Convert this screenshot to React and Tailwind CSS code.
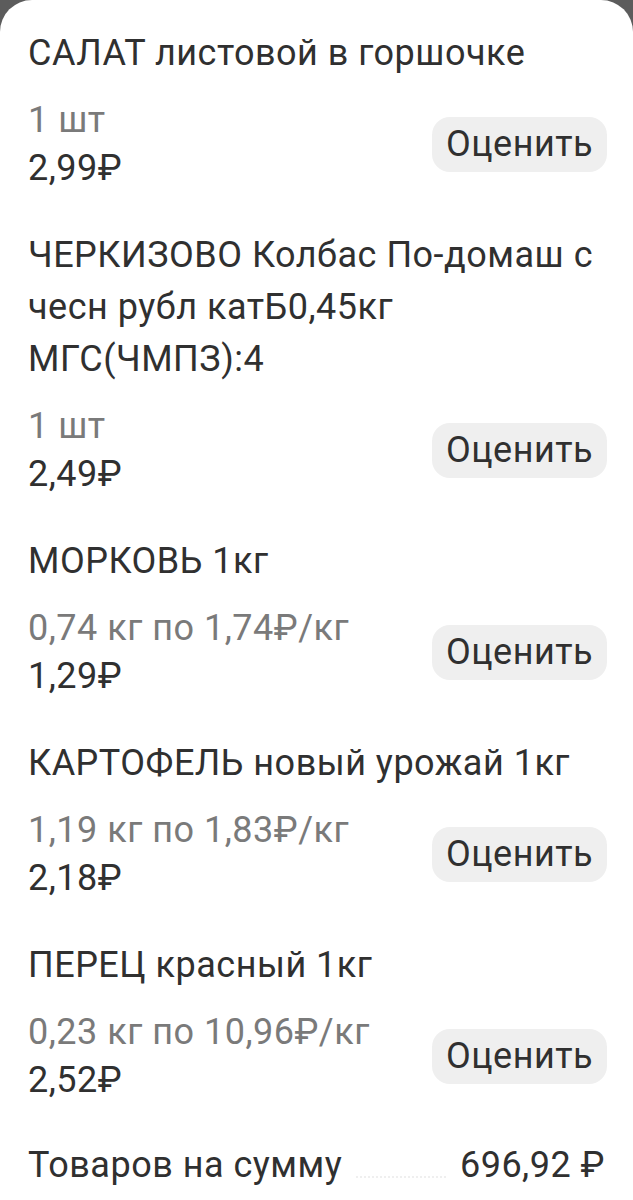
import React from 'react';

const items = [
  { title: ['САЛАТ листовой в горшочке'], qty: '1 шт', price: '2,99₽' },
  {
    title: ['ЧЕРКИЗОВО Колбас По-домаш с', 'чесн рубл катБ0,45кг', 'МГС(ЧМПЗ):4'],
    qty: '1 шт',
    price: '2,49₽',
  },
  { title: ['МОРКОВЬ 1кг'], qty: '0,74 кг по 1,74₽/кг', price: '1,29₽' },
  { title: ['КАРТОФЕЛЬ новый урожай 1кг'], qty: '1,19 кг по 1,83₽/кг', price: '2,18₽' },
  { title: ['ПЕРЕЦ красный 1кг'], qty: '0,23 кг по 10,96₽/кг', price: '2,52₽' },
];

const Item = ({ item }) => (
  <div className="flex flex-col">
    <div className="text-[36px] leading-[52px] tracking-[0.5px] text-[#303030]">
      {item.title.map((line) => (
        <div key={line} className="whitespace-nowrap">{line}</div>
      ))}
    </div>
    <div className="mt-[17px] flex items-center justify-between">
      <div className="flex flex-col text-[36px] leading-[48px] tracking-[0.5px]">
        <span className="text-[#7a7a7a]">{item.qty}</span>
        <span className="text-[#303030]">{item.price}</span>
      </div>
      <button className="w-[175px] h-[55px] rounded-[18px] bg-[#efefef] text-[36px] tracking-[0.5px] text-[#303030] flex items-center justify-center">
        Оценить
      </button>
    </div>
  </div>
);

export default function App() {
  return (
    <div
      className="h-[1200px] overflow-hidden bg-[#5c5c5c]"
      style={{ fontFamily: 'Roboto, "Noto Sans", sans-serif' }}
    >
      <div className="h-full bg-white rounded-t-[32px] pt-[27px] pl-[28px] pr-[26px] flex flex-col gap-[37px]">
        {items.map((item, i) => (
          <Item key={i} item={item} />
        ))}
        <div className="flex items-center text-[36px] leading-[48px] tracking-[0.5px] text-[#303030]">
          <span>Товаров на сумму</span>
          <div className="flex-1 mx-[14px] mt-[24px] border-b-2 border-dotted border-[#efefef]" />
          <span className="pr-[2px]">696,92 ₽</span>
        </div>
      </div>
    </div>
  );
}
